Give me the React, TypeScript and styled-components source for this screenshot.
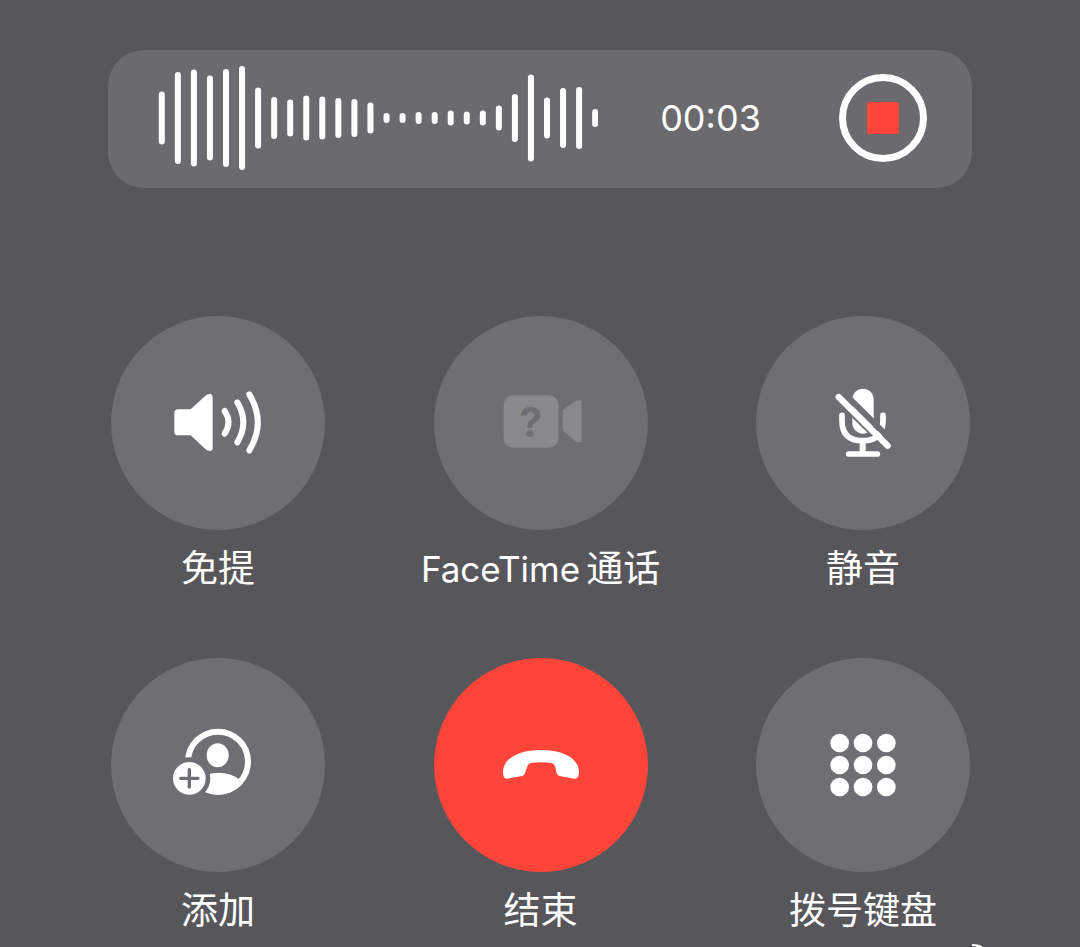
import React from "react";
import styled, { createGlobalStyle } from "styled-components";

const colors = {
  page: "#57565b",
  panel: "#6b6a6e",
  key: "#6f6e73",
  dim: "#89888c",
  red: "#ff453a",
  white: "#ffffff",
};

const GlobalStyle = createGlobalStyle`
  *, *::before, *::after {
    box-sizing: border-box;
  }
  body {
    margin: 0;
    background: ${colors.page};
    color: ${colors.white};
    font-family: Inter, "Noto Sans CJK SC", sans-serif;
  }
`;

const Screen = styled.main`
  position: relative;
  min-height: 100vh;
  padding: 50px 10% 0;
  overflow: hidden;
`;

const Recorder = styled.section`
  display: flex;
  align-items: center;
  height: 138px;
  padding: 0 45px 2px 50px;
  border-radius: 36px;
  background: ${colors.panel};
`;

const Wave = styled.svg`
  flex: none;
  width: 440px;
  height: 106px;
  fill: ${colors.white};
`;

const Timer = styled.time`
  flex: 1;
  padding: 0 16px 0 0;
  text-align: center;
  font-size: 36px;
  line-height: 44px;
  font-weight: 400;
`;

const StopButton = styled.button`
  display: grid;
  place-items: center;
  flex: none;
  width: 88px;
  height: 88px;
  padding: 0;
  border: 7px solid ${colors.white};
  border-radius: 50%;
  background: transparent;
  cursor: pointer;
`;

const StopMark = styled.span`
  width: 32px;
  height: 32px;
  border-radius: 2px;
  background: ${colors.red};
`;

const Keys = styled.section`
  display: grid;
  grid-template-columns: repeat(3, 214px);
  justify-content: space-between;
  row-gap: 67px;
  padding: 128px 2px 0 3px;
`;

const Key = styled.div`
  display: flex;
  flex-direction: column;
  align-items: center;
  gap: 17px;
`;

const RoundButton = styled.button<{ $tone: string }>`
  display: grid;
  place-items: center;
  width: 214px;
  height: 214px;
  padding: 0;
  border: 0;
  border-radius: 50%;
  background: ${(p) => p.$tone};
  cursor: pointer;

  &:disabled {
    cursor: default;
  }
`;

const KeyLabel = styled.label`
  display: flex;
  align-items: center;
  gap: 6px;
  height: 44px;
  font-size: 37px;
  line-height: 44px;
  white-space: nowrap;
`;

const Latin = styled.span`
  font-size: 35px;
`;

const CornerMark = styled.svg`
  position: absolute;
  right: 96px;
  bottom: 0;
  width: 12px;
  height: 3px;
`;

const levels = [
  53, 92, 97, 85, 98, 104, 61, 42, 37, 45, 43, 40, 38, 31, 10, 10, 12, 12, 15,
  13, 15, 25, 48, 87, 41, 60, 62, 18,
];

const SpeakerIcon = () => (
  <svg width="120" height="100" viewBox="-6 9 360 300" aria-hidden="true">
    <path
      d="M54 118H92L136 77Q142 72 149 72Q158 73 158 82V234Q158 243 149 243Q142 243 136 237L92 196H54Q43 196 43 185V129Q43 118 54 118Z"
      fill="#fff"
    />
    <g fill="none" stroke="#fff" strokeWidth="18" strokeLinecap="round">
      <path d="M194 123Q217 157 194 191" />
      <path d="M232 97Q268 157 232 217" />
      <path d="M268 73Q319 157 268 241" />
    </g>
  </svg>
);

const VideoIcon = () => (
  <svg width="110" height="90" viewBox="-12 -6 330 270" aria-hidden="true">
    <rect x="41" y="46" width="164" height="157" rx="28" fill={colors.dim} />
    <path
      d="M218 96Q218 91 222 88L256 64Q260 61 266 61H275V187H266Q260 187 256 183L222 155Q218 152 218 147Z"
      fill={colors.dim}
    />
    <text
      x="123"
      y="170"
      textAnchor="middle"
      fontFamily="Inter, sans-serif"
      fontWeight="700"
      fontSize="122"
      fill={colors.key}
    >
      ?
    </text>
  </svg>
);

const MuteIcon = () => (
  <svg width="110" height="100" viewBox="-6 9 330 300" aria-hidden="true">
    <rect x="127" y="56" width="64" height="135" rx="32" fill="#fff" />
    <g fill="none" stroke="#fff" strokeLinecap="round">
      <path d="M96 136V152Q96 212 158 212Q219 212 219 152V136" strokeWidth="17" />
      <path d="M158 214V250" strokeWidth="18" strokeLinecap="butt" />
      <path d="M116 252H202" strokeWidth="17" />
    </g>
    <path d="M97 65L251 217" stroke={colors.key} strokeWidth="18" />
    <path d="M80 88L190 195" stroke={colors.key} strokeWidth="14" />
    <path d="M86 81L233 227" stroke="#fff" strokeWidth="19" strokeLinecap="round" />
  </svg>
);

const AddIcon = () => (
  <svg width="110" height="96" viewBox="9 6 330 288" aria-hidden="true">
    <defs>
      <mask id="badge-gap">
        <rect x="0" y="0" width="360" height="300" fill="#fff" />
        <circle cx="88" cy="190" r="63" fill="#000" />
      </mask>
      <clipPath id="portrait">
        <circle cx="174" cy="140" r="99" />
      </clipPath>
    </defs>
    <g mask="url(#badge-gap)">
      <circle cx="174" cy="140" r="90" fill="none" stroke="#fff" strokeWidth="18" />
      <ellipse
        cx="176"
        cy="236"
        rx="84"
        ry="63"
        fill="#fff"
        clipPath="url(#portrait)"
      />
    </g>
    <ellipse cx="173" cy="121" rx="33" ry="36" fill="#fff" />
    <circle cx="88" cy="190" r="49" fill="#fff" />
    <path
      d="M62 190H114M88 164V216"
      stroke={colors.key}
      strokeWidth="10"
      strokeLinecap="round"
    />
  </svg>
);

const HangUpIcon = () => (
  <svg width="110" height="70" viewBox="-12 0 330 210" aria-hidden="true">
    <path
      d="M39 127C39 86 84 60 153 60C222 60 267 86 267 127Q267 147 253 146L209 138Q201 136 199 127L195 109Q193 101 185 99Q153 94 122 99Q114 101 112 109L106 127Q104 136 96 138L52 146Q39 148 39 127Z"
      fill="#fff"
    />
  </svg>
);

const KeypadIcon = () => (
  <svg width="100" height="90" viewBox="-6 0 300 270" aria-hidden="true">
    {[69, 135, 201].map((cy) =>
      [74, 144, 214].map((cx) => (
        <circle key={`${cx}-${cy}`} cx={cx} cy={cy} r="28" fill="#fff" />
      )),
    )}
  </svg>
);

const keys = [
  { id: "speaker", label: "免提", icon: <SpeakerIcon />, tone: colors.key },
  {
    id: "facetime",
    latin: "FaceTime",
    label: "通话",
    icon: <VideoIcon />,
    tone: colors.key,
    disabled: true,
  },
  { id: "mute", label: "静音", icon: <MuteIcon />, tone: colors.key },
  { id: "add", label: "添加", icon: <AddIcon />, tone: colors.key },
  { id: "end", label: "结束", icon: <HangUpIcon />, tone: colors.red },
  { id: "keypad", label: "拨号键盘", icon: <KeypadIcon />, tone: colors.key },
];

export default function App() {
  return (
    <>
      <GlobalStyle />
      <Screen>
        <Recorder>
          <Wave viewBox="0 0 440 106" aria-hidden="true">
            {levels.map((h, i) => (
              <rect
                key={i}
                x={0.8 + i * 16.05}
                y={53 - h / 2}
                width="6"
                height={h}
                rx="3"
              />
            ))}
          </Wave>
          <Timer>00:03</Timer>
          <StopButton type="button" aria-label="停止录音">
            <StopMark />
          </StopButton>
        </Recorder>
        <Keys>
          {keys.map((k) => (
            <Key key={k.id}>
              <RoundButton
                id={k.id}
                type="button"
                $tone={k.tone}
                disabled={k.disabled}
              >
                {k.icon}
              </RoundButton>
              <KeyLabel htmlFor={k.id}>
                {k.latin && <Latin>{k.latin}</Latin>}
                <span>{k.label}</span>
              </KeyLabel>
            </Key>
          ))}
        </Keys>
        <CornerMark viewBox="0 0 12 3" aria-hidden="true">
          <path d="M0 0Q8 0 11 3H5Q4 2 0 2Z" fill="#fff" />
        </CornerMark>
      </Screen>
    </>
  );
}
